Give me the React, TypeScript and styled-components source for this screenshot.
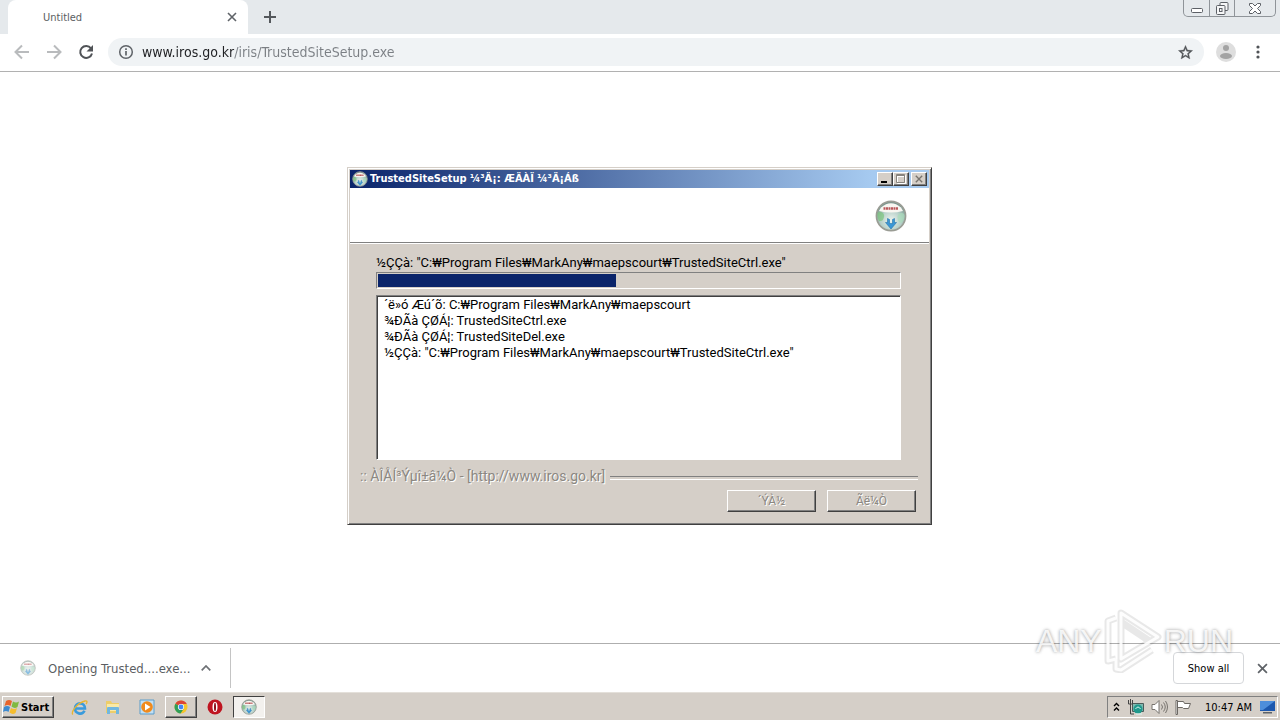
import React from 'react';
import styled, { createGlobalStyle, css } from 'styled-components';

const GlobalStyle = createGlobalStyle`
  * { box-sizing: border-box; }
  body { margin: 0; background: #fff; }
  button, input { font: inherit; color: inherit; margin: 0; padding: 0; border: 0; background: none; }
  svg { display: block; flex: none; }
`;

const ui = '"DejaVu Sans Condensed", "DejaVu Sans", sans-serif';
const face = '#d5cfc8';

const Screen = styled.div`
  position: relative;
  display: flex;
  flex-direction: column;
  min-height: 100vh;
  font-family: ${ui};
  font-size: 11px;
  color: #000;
  overflow: hidden;
`;

/* Browser */
const TabStrip = styled.header`
  display: flex;
  height: 34px;
  padding-left: 8px;
  background: #e5e9ec;
`;
const Tab = styled.div`
  display: flex;
  align-items: center;
  justify-content: space-between;
  width: 240px;
  padding: 0 10px 0 35px;
  border-radius: 8px 8px 0 0;
  background: #fff;
  color: #5b5e62;
`;
const IconButton = styled.button<{ $size?: number }>`
  display: flex;
  flex: none;
  align-items: center;
  justify-content: center;
  width: ${p => p.$size ?? 32}px;
  height: ${p => p.$size ?? 32}px;
`;
const NewTabButton = styled(IconButton)`
  width: 44px;
  height: 34px;
`;
const WindowControls = styled.div`
  display: flex;
  height: 17px;
  margin: 0 4px 0 auto;
  border: 1px solid #8f9499;
  border-top: 0;
  border-radius: 0 0 5px 5px;
`;
const WindowControl = styled.button<{ $wide?: boolean }>`
  display: flex;
  align-items: center;
  justify-content: center;
  width: ${p => (p.$wide ? 41 : 25)}px;
  & + & { border-left: 1px solid #8f9499; }
`;
const Toolbar = styled.nav`
  display: flex;
  align-items: center;
  height: 38px;
  padding: 0 6px 1px;
  border-bottom: 1px solid #b1b1b1;
  background: #fff;
`;
const AddressBar = styled.label`
  display: flex;
  flex: 1;
  align-items: center;
  gap: 8px;
  height: 28px;
  margin: 0 6px;
  padding: 0 10px;
  border-radius: 14px;
  background: #f0f3f5;
`;
const AddressInput = styled.input`
  flex: 1;
  height: 24px;
  font-size: 14px;
  background: linear-gradient(90deg, #202124 92px, #7b7f84 92px);
  background-clip: text;
  -webkit-text-fill-color: transparent;
`;
const Page = styled.main`
  flex: 1;
  background: #fff;
`;
const DownloadBar = styled.footer`
  display: flex;
  align-items: center;
  height: 49px;
  padding-right: 8px;
  border-top: 1px solid #aeaeae;
  background: #fff;
`;
const Download = styled.div`
  display: flex;
  align-items: center;
  width: 231px;
  height: 40px;
  padding: 0 14px 0 20px;
  border-right: 1px solid #c4c4c4;
`;
const DownloadName = styled.button`
  display: flex;
  flex: 1;
  align-items: center;
  gap: 12px;
  font-size: 13px;
  color: #5b5e62;
`;
const ShowAll = styled.button`
  width: 71px;
  height: 32px;
  margin: 0 8px 0 auto;
  border: 1px solid #d5d7da;
  border-radius: 4px;
`;

/* Desktop */
const raised = css`
  border: 1px solid;
  border-color: #fff #404040 #404040 #fff;
  box-shadow: inset -1px -1px #808080;
`;
const Taskbar = styled.footer`
  display: flex;
  align-items: center;
  height: 28px;
  padding: 1px 2px 0;
  border-top: 1px solid #e4e0da;
  background: ${face};
`;
const StartButton = styled.button`
  ${raised}
  display: flex;
  align-items: center;
  gap: 1px;
  width: 52px;
  height: 22px;
  margin-right: 9px;
  font-weight: bold;
`;
const Task = styled.button<{ $state?: 'open' | 'active' }>`
  display: flex;
  align-items: center;
  justify-content: center;
  width: 32px;
  height: 22px;
  margin-right: 2px;
  ${p => p.$state === 'open' && raised}
  ${p => p.$state === 'active' && css`
    border: 1px solid;
    border-color: #404040 #fff #fff #404040;
    background: #f3f1ee;
  `}
`;
const Tray = styled.div`
  display: flex;
  align-items: center;
  gap: 7px;
  height: 22px;
  margin-left: auto;
  padding: 0 2px 0 5px;
  border: 1px solid;
  border-color: #808080 #fff #fff #808080;
`;
const Clock = styled.time`
  margin-left: 6px;
`;

/* Installer */
const Dialog = styled.section`
  position: absolute;
  top: 167px;
  left: calc(50% - 293px);
  width: 585px;
  padding: 2px;
  border: 1px solid;
  border-color: #d5cfc8 #404040 #404040 #d5cfc8;
  box-shadow: inset 1px 1px #fff, inset -1px -1px #808080;
  background: ${face};
  font-family: Roboto, "Liberation Sans", sans-serif;
  font-size: 13px;
  line-height: 16px;
`;
const TitleBar = styled.header`
  display: flex;
  align-items: center;
  gap: 2px;
  height: 18px;
  padding: 0 2px;
  background: linear-gradient(90deg, #0a246a, #a6caf0 90%);
  color: #fff;
  font-family: ${ui};
  font-size: 11px;
`;
const Title = styled.h1`
  flex: 1;
  margin: 0;
  font-size: 11px;
`;
const CaptionButtons = styled.div`
  display: flex;
`;
const CaptionButton = styled.button<{ $apart?: boolean }>`
  ${raised}
  display: flex;
  align-items: center;
  justify-content: center;
  width: 16px;
  height: 14px;
  margin-left: ${p => (p.$apart ? 2 : 0)}px;
  background: ${face};
`;
const Banner = styled.div`
  display: flex;
  align-items: center;
  justify-content: flex-end;
  height: 55px;
  padding: 2px 22px 0 0;
  border-bottom: 1px solid #808080;
  background: #fff;
`;
const Body = styled.div`
  padding: 11px 28px 0 26px;
  border-top: 1px solid #fff;
`;
const Status = styled.label`
  display: block;
`;
const Progress = styled.progress`
  display: block;
  appearance: none;
  width: 100%;
  height: 17px;
  margin: 1px 0 6px;
  padding: 1px;
  border: 1px solid;
  border-color: #808080 #fff #fff #808080;
  background: ${face};
  &::-webkit-progress-bar { background: ${face}; }
  &::-webkit-progress-value { background: #0a246a; }
`;
const Log = styled.ul`
  height: 165px;
  margin: 0;
  padding: 1px 7px;
  border: 1px solid;
  border-color: #808080 #fff #fff #808080;
  box-shadow: inset 1px 1px #404040;
  background: #fff;
  list-style: none;
`;
const Branding = styled.div`
  display: flex;
  align-items: center;
  gap: 5px;
  padding: 8px 11px 0 10px;
  color: #8b8781;
  font-size: 14px;
  text-shadow: 1px 1px #fff;
  &::after {
    content: '';
    flex: 1;
    height: 2px;
    margin-top: 4px;
    border-top: 1px solid #808080;
    border-bottom: 1px solid #fff;
  }
`;
const Actions = styled.div`
  display: flex;
  justify-content: flex-end;
  gap: 11px;
  padding: 6px 13px 10px;
`;
const Action = styled.button`
  ${raised}
  width: 89px;
  height: 22px;
  font-size: 12px;
  line-height: 18px;
  &:disabled { color: #8b8781; text-shadow: 1px 1px #fff; }
`;

const Watermark = styled.div`
  position: absolute;
  right: 47px;
  bottom: 47px;
  display: flex;
  align-items: center;
  font: 32px/36px "Liberation Sans", sans-serif;
  color: rgba(255, 255, 255, 0.85);
  text-shadow: 0 0 3px rgba(0, 0, 0, 0.3), 0 0 4px rgba(0, 0, 0, 0.15);
  pointer-events: none;
`;

const SetupIcon = ({ size, faded }: { size: number; faded?: boolean }) => (
  <svg width={size} height={size} viewBox="0 0 32 32" opacity={faded ? 0.6 : 1} aria-hidden="true">
    <defs>
      <radialGradient id="globe" cx=".5" cy=".65" r=".6">
        <stop offset="0" stopColor="#edf3ee" />
        <stop offset=".6" stopColor="#b5cfc8" />
        <stop offset="1" stopColor="#78968e" />
      </radialGradient>
    </defs>
    <circle cx="16" cy="16" r="14.6" fill="url(#globe)" stroke="#9a9c94" strokeWidth="1.6" />
    <path d="M2.500 13C5 10 10 13 9 17s-2 4-5 4c-1-2-2-5-1.500-8z" fill="#7cc47c" opacity=".7" />
    <path d="M23 15c3-3 6-2 6.500 0s-1 6-3 8c-3 0-5-5-3.500-8z" fill="#a9dbba" opacity=".7" />
    <path d="M6 7.500Q16-1 26 7.500l2 3.500Q16 14 4 11z" fill="#f8f6f1" />
    <path d="M8.500 8.500h15" stroke="#b9585b" strokeWidth="2.600" strokeDasharray="2 .5" />
    <path d="M12.500 18.500v4h-2l5.500 6.500 5.500-6.500h-2v-4l-2 1v4h-3v-4z" fill="#3a97d6" stroke="#2774aa" strokeWidth=".6" />
  </svg>
);

const Cross = ({ size = 10, color = '#5f6368', width = 1.6 }) => (
  <svg width={size} height={size} viewBox="0 0 10 10" aria-hidden="true">
    <path d="M1 1l8 8M9 1L1 9" stroke={color} strokeWidth={width} />
  </svg>
);

const path = 'C:₩Program Files₩MarkAny₩maepscourt';
const running = `½ÇÇà: "${path}₩TrustedSiteCtrl.exe"`;
const log = [
  `´ë»ó Æú´õ: ${path}`,
  '¾ÐÃà ÇØÁ¦: TrustedSiteCtrl.exe',
  '¾ÐÃà ÇØÁ¦: TrustedSiteDel.exe',
  running,
];

const Browser = () => (
  <>
    <TabStrip>
      <Tab>
        <span>Untitled</span>
        <IconButton $size={12} aria-label="Close tab"><Cross /></IconButton>
      </Tab>
      <NewTabButton aria-label="New tab">
        <svg width="12" height="12" viewBox="0 0 12 12"><path d="M6 0v12M0 6h12" stroke="#54585c" strokeWidth="2" /></svg>
      </NewTabButton>
      <WindowControls>
        <WindowControl aria-label="Minimize">
          <svg width="12" height="12" viewBox="0 0 12 12"><rect x=".5" y="6.500" width="11" height="4" rx="1" fill="#fff" stroke="#5c6066" /></svg>
        </WindowControl>
        <WindowControl aria-label="Restore">
          <svg width="13" height="13" viewBox="0 0 13 13" fill="#f5f6f7" stroke="#5c6066"><rect x="4" y=".5" width="8" height="8" rx="1" /><rect x=".5" y="3.500" width="8.500" height="9" rx="1" /><rect x="3.500" y="6.500" width="2.500" height="3" /></svg>
        </WindowControl>
        <WindowControl $wide aria-label="Close">
          <svg width="12" height="11" viewBox="0 0 12 11"><path d="M.5.5h3L6 3 8.500.5h3v2L8.500 5.500l3 3v2h-3L6 8l-2.500 2.500h-3v-2l3-3-3-3z" fill="#fff" stroke="#5c6066" /></svg>
        </WindowControl>
      </WindowControls>
    </TabStrip>
    <Toolbar>
      <IconButton aria-label="Back">
        <svg width="16" height="16" viewBox="0 0 16 16" fill="none" stroke="#b9bbbd" strokeWidth="2"><path d="M15 8H2M8 1.500L1.500 8 8 14.500" /></svg>
      </IconButton>
      <IconButton aria-label="Forward">
        <svg width="16" height="16" viewBox="0 0 16 16" fill="none" stroke="#b9bbbd" strokeWidth="2"><path d="M1 8h13M8 1.500L14.500 8 8 14.500" /></svg>
      </IconButton>
      <IconButton aria-label="Reload">
        <svg width="16" height="16" viewBox="0 0 16 16"><path d="M13 4.300A6 6 0 1 0 14 9.500" fill="none" stroke="#505357" strokeWidth="2" /><path d="M15 1v6.500H8.500z" fill="#505357" /></svg>
      </IconButton>
      <AddressBar>
        <svg width="16" height="16" viewBox="0 0 16 16" fill="none" stroke="#5f6368"><circle cx="8" cy="8" r="6.300" strokeWidth="1.500" /><path d="M8 7v4.500M8 4.300v1.600" strokeWidth="1.700" /></svg>
        <AddressInput aria-label="Address" defaultValue="www.iros.go.kr/iris/TrustedSiteSetup.exe" />
        <svg width="17" height="17" viewBox="0 0 24 24" fill="#505357" stroke="#505357" strokeWidth=".5"><path d="M22 9.240l-7.190-.620L12 2 9.190 8.630 2 9.240l5.460 4.730L5.820 21 12 17.270 18.180 21l-1.630-7.030L22 9.240zM12 15.400l-3.760 2.270 1-4.280-3.320-2.880 4.380-.380L12 6.100l1.710 4.040 4.380.380-3.320 2.880 1 4.280L12 15.400z" /></svg>
      </AddressBar>
      <IconButton aria-label="Profile">
        <svg width="20" height="20" viewBox="0 0 20 20"><circle cx="10" cy="10" r="10" fill="#dedede" /><circle cx="10" cy="6" r="3" fill="#a3a3a3" /><ellipse cx="10" cy="14" rx="6" ry="3" fill="#a3a3a3" /></svg>
      </IconButton>
      <IconButton aria-label="Menu">
        <svg width="4" height="14" viewBox="0 0 4 14" fill="#505357"><circle cx="2" cy="2" r="1.600" /><circle cx="2" cy="7" r="1.600" /><circle cx="2" cy="12" r="1.600" /></svg>
      </IconButton>
    </Toolbar>
    <Page />
    <DownloadBar>
      <Download>
        <DownloadName><SetupIcon size={16} faded />Opening Trusted....exe...</DownloadName>
        <IconButton $size={20} aria-label="Download options">
          <svg width="10" height="6" viewBox="0 0 10 6" fill="none"><path d="M.7 5.300L5 1l4.300 4.300" stroke="#6d7074" strokeWidth="1.700" /></svg>
        </IconButton>
      </Download>
      <ShowAll>Show all</ShowAll>
      <IconButton $size={20} aria-label="Close downloads"><Cross size={11} /></IconButton>
    </DownloadBar>
  </>
);

const Installer = () => (
  <Dialog role="dialog" aria-labelledby="setup-title">
    <TitleBar>
      <SetupIcon size={16} />
      <Title id="setup-title">TrustedSiteSetup ¼³Ä¡: ÆÄÀÏ ¼³Ä¡Áß</Title>
      <CaptionButtons>
        <CaptionButton aria-label="Minimize"><svg width="10" height="8"><path d="M1 7h6" stroke="#000" strokeWidth="2" /></svg></CaptionButton>
        <CaptionButton aria-label="Maximize" disabled><svg width="10" height="10" fill="none"><path d="M1.500 1.500h8v8h-8zM1 2.500h9" stroke="#fff" /><path d="M.5.500h8v8h-8zM1 1.500h7" stroke="#88847e" /></svg></CaptionButton>
        <CaptionButton $apart aria-label="Close" disabled><Cross size={8} color="#77736d" width={1.7} /></CaptionButton>
      </CaptionButtons>
    </TitleBar>
    <Banner><SetupIcon size={32} /></Banner>
    <Body>
      <Status htmlFor="setup-progress">{running}</Status>
      <Progress id="setup-progress" max={522} value={238} />
      <Log>{log.map(line => <li key={line}>{line}</li>)}</Log>
    </Body>
    <Branding>:: ÀÎÅÍ³Ýµî±â¼Ò - [http://www.iros.go.kr]</Branding>
    <Actions>
      <Action disabled>´ÝÀ½</Action>
      <Action disabled>Ãë¼Ò</Action>
    </Actions>
  </Dialog>
);

const DesktopTaskbar = () => (
  <Taskbar>
    <StartButton>
      <svg width="17" height="16" viewBox="0 0 17 16"><path d="M3 2q3-2 6 0L7.500 7Q5 5 1.500 7z" fill="#e8642c" /><path d="M10 2.500q3 2 6 0L14.500 8q-3 2-6-.5z" fill="#80b940" /><path d="M1 8q3-2 6 0l-1.500 5Q3 11 0 13z" fill="#3d8ad0" /><path d="M8 9q3 2 6 0l-1.500 5q-3 2-6-.5z" fill="#f5bd2e" /></svg>
      Start
    </StartButton>
    <Task aria-label="Internet Explorer">
      <svg width="17" height="17" viewBox="0 0 17 17" fill="none"><path d="M4 9.500h10A5 5 0 0 0 4 9.200a5 5 0 0 0 9.500 2.500" stroke="#3a9bdc" strokeWidth="2.600" /><path d="M2 15.500C-1 14 6 4 14 2c3-.5 2 2 1 3" stroke="#e8b530" strokeWidth="1.300" /></svg>
    </Task>
    <Task aria-label="Explorer">
      <svg width="16" height="16" viewBox="0 0 16 16"><path d="M1 2h5l1 2h7v10H1z" fill="#edcd69" /><path d="M2 5h12v7H2z" fill="#f9e9a6" /><path d="M2 15V9q0-1 1-1h10q1 0 1 1v6h-3v-4H5v4z" fill="#71b7df" /></svg>
    </Task>
    <Task aria-label="Media Player">
      <svg width="16" height="16" viewBox="0 0 16 16"><path d="M1 1h14v14H1z" fill="#c1dff4" stroke="#5b9dcb" /><circle cx="8" cy="8" r="5.800" fill="#f08a1c" /><path d="M6 4.500L11.500 8 6 11.500z" fill="#fff" /></svg>
    </Task>
    <Task $state="open" aria-label="Chrome">
      <svg width="14" height="14" viewBox="0 0 14 14"><circle cx="7" cy="7" r="6.500" fill="#f5c52c" /><path d="M7 7L1.400 3.700A6.500 6.500 0 0 1 12.800 4H7z" fill="#db4437" /><path d="M7 7L1.400 3.700A6.500 6.500 0 0 0 6.500 13.500L10 8.500z" fill="#2f9e58" /><circle cx="7" cy="7" r="3.100" fill="#fff" /><circle cx="7" cy="7" r="2.400" fill="#4285f4" /></svg>
    </Task>
    <Task aria-label="Opera">
      <svg width="16" height="16" viewBox="0 0 16 16"><circle cx="8" cy="8" r="7.500" fill="#bf1420" /><ellipse cx="8" cy="8" rx="2.500" ry="5" fill="#fff" /><ellipse cx="8" cy="8" rx="1" ry="4.300" fill="#8b0d17" /></svg>
    </Task>
    <Task $state="active" aria-label="TrustedSiteSetup"><SetupIcon size={16} /></Task>
    <Tray>
      <svg width="7" height="10" viewBox="0 0 7 10" fill="none" stroke="#000" strokeWidth="1.400"><path d="M1 4l2.500-2.500L6 4M1 8.500L3.500 6 6 8.500" /></svg>
      <svg width="17" height="16" viewBox="0 0 17 16"><path d="M5.500 4.500h11v8h-11z" fill="#7eb9b0" stroke="#4b5b5a" /><path d="M1.500 1v4h4V1M3.500 0v15H7" fill="none" stroke="#444" /><circle cx="11" cy="10" r="4.500" fill="#20998c" /><path d="M8.500 10q2.500-4 5 0M9 15h6" stroke="#d9f4ef" fill="none" /></svg>
      <svg width="17" height="16" viewBox="0 0 17 16" fill="none" stroke="#77736e"><path d="M1 5.500h3L8 1.500v13l-4-4H1z" fill="#fff" /><path d="M10.500 5.500q2 2.500 0 5M12.500 3.500q3.500 4.500 0 9M14.500 2q4 6 0 12" /></svg>
      <svg width="17" height="16" viewBox="0 0 17 16" fill="#fff" stroke="#6d6964"><path d="M1 1.500h1.500v14H1zM2.500 2.500h6l1 2h6l-2 5H8.500l-1-1h-5z" /></svg>
      <Clock>10:47 AM</Clock>
      <svg width="16" height="14" viewBox="0 0 16 14"><path d="M1 1h15v10H1z" fill="#1c58ae" /><path d="M1 1h15L4 10H1z" fill="#4d8edb" /><path d="M4 12h9v1.500H4z" fill="#5c6269" /></svg>
    </Tray>
  </Taskbar>
);

export default function App() {
  return (
    <Screen>
      <GlobalStyle />
      <Browser />
      <DesktopTaskbar />
      <Installer />
      <Watermark>
        <span>ANY</span>
        <svg width="62" height="64" viewBox="0 0 62 64" fill="none" strokeLinejoin="round">
          <path id="play" d="M19 4L56 28 19 50zM14 9L6 12v40l8-2M14 50v10l5 1L50 41M19 13l30 20" stroke="#000" strokeOpacity=".09" strokeWidth="7" />
          <path d="M19 4L56 28 19 50zM14 9L6 12v40l8-2M14 50v10l5 1L50 41" stroke="#fff" strokeOpacity=".9" strokeWidth="3" />
        </svg>
        <span>RUN</span>
      </Watermark>
    </Screen>
  );
}
